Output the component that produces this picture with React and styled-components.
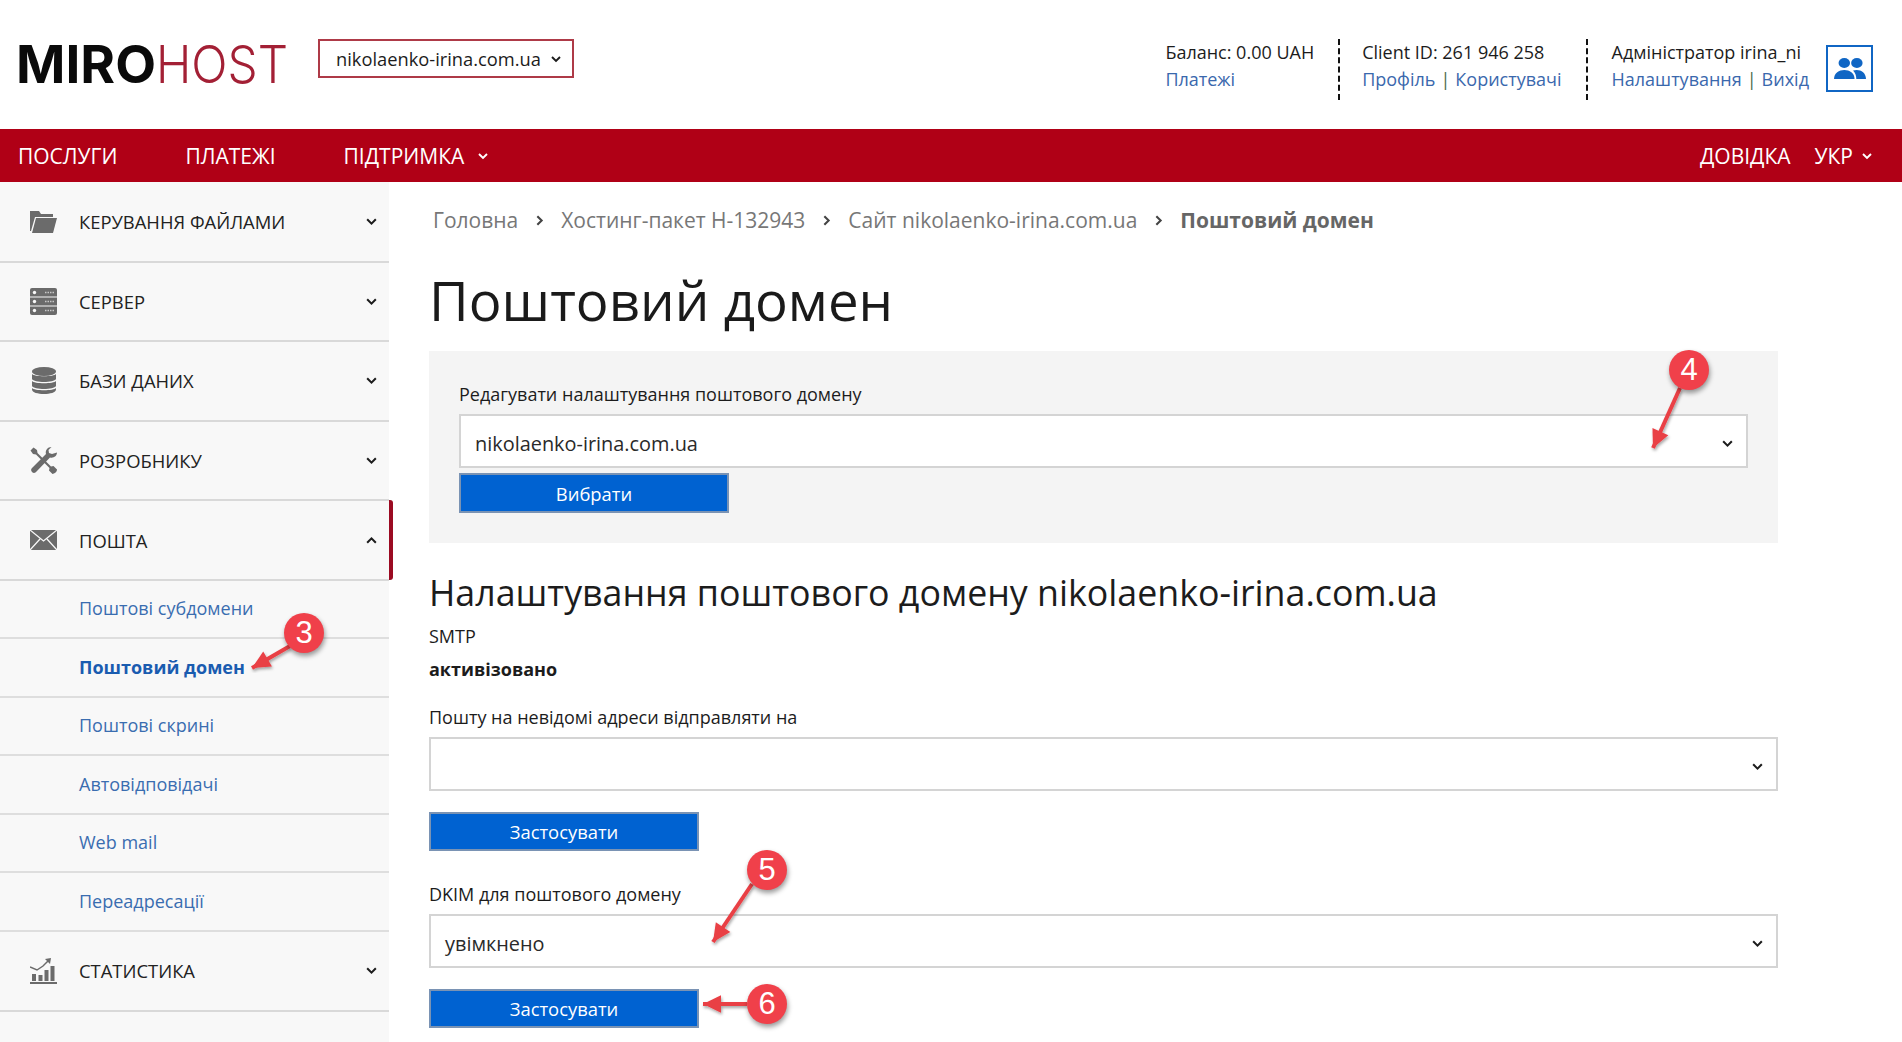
import React from "react";
import styled, { createGlobalStyle } from "styled-components";

const GlobalStyle = createGlobalStyle`
  html, body {
    margin: 0;
    padding: 0;
    background: #fff;
    font-family: "Open Sans", "Liberation Sans", sans-serif;
    color: #1c1c1c;
  }
`;

const Page = styled.div`
  position: relative;
  width: 1902px;
  height: 1042px;
  overflow: hidden;
`;

const Header = styled.header`
  height: 129px;
  display: flex;
  align-items: flex-start;
  box-sizing: border-box;
  padding: 39px 29px 0 18px;
`;

const LogoSvg = styled.svg`
  display: block;
  flex: none;
  width: 302px;
  height: 70px;
  margin: -6px 0 -25px -2px;
`;

const DomainPicker = styled.div`
  width: 256px;
  height: 39px;
  box-sizing: border-box;
  border: 2px solid #ae3a47;
  display: flex;
  align-items: center;
  padding-left: 16px;
  font-size: 18.3px;
  gap: 9px;
`;

const HeaderRight = styled.div`
  margin-left: auto;
  display: flex;
  align-items: flex-start;
`;

const InfoBlock = styled.div`
  height: 61px;
  box-sizing: border-box;
  font-size: 18px;
  line-height: 27px;
  padding: 0 ${(p) => p.$right}px 0 ${(p) => p.$left}px;
  border-right: ${(p) => (p.$divider ? "2px dashed #111" : "none")};
`;

const InfoLine = styled.div`
  white-space: nowrap;
  color: #1c1c1c;
`;

const HeaderLink = styled.a`
  color: #3a68ad;
`;

const Pipe = styled.span`
  color: #4c6b4c;
  margin: 0 5px;
`;

const UserBox = styled.div`
  width: 47px;
  height: 47px;
  box-sizing: border-box;
  margin: 6px 0 0 17px;
  border: 2px solid #1066c4;
  display: flex;
  align-items: center;
  justify-content: center;
`;

const NavBar = styled.nav`
  height: 53px;
  background: #b00016;
  color: #fff;
  display: flex;
  align-items: center;
  padding: 0 29px 0 18px;
  font-size: 21px;
`;

const NavItem = styled.a`
  display: flex;
  align-items: center;
  gap: ${(p) => p.$inner || 14}px;
  margin-right: ${(p) => p.$gap || 0}px;
`;

const NavSpacer = styled.div`
  flex: 1;
`;

const Body = styled.div`
  display: flex;
  align-items: stretch;
  height: 860px;
`;

const Sidebar = styled.aside`
  width: 389px;
  flex: none;
  background: #f8f8f8;
  padding-top: 1px;
`;

const MenuRow = styled.div`
  position: relative;
  height: 79.6px;
  box-sizing: border-box;
  display: flex;
  align-items: center;
  border-bottom: 2px solid #d9d9d9;
  padding: 0 11px 0 30px;
  font-size: 18.4px;
  color: #222;

  ${(p) =>
    p.$active &&
    `&::after {
      content: "";
      position: absolute;
      right: -4px;
      top: -1px;
      bottom: -1px;
      width: 4px;
      background: #9b0a22;
      border-radius: 0 3px 3px 0;
    }`}
`;

const MenuIcon = styled.span`
  width: 27px;
  height: 27px;
  flex: none;
  margin-right: 22px;
  display: flex;
  align-items: center;
  justify-content: center;
`;

const MenuLabel = styled.span`
  flex: 1;
`;

const SubRow = styled.a`
  height: 58.5px;
  box-sizing: border-box;
  display: flex;
  align-items: center;
  border-bottom: 2px solid #dedede;
  padding: 0 0 2px 79px;
  font-size: 18px;
  color: ${(p) => (p.$active ? "#1a5cb0" : "#3a6db0")};
  font-weight: ${(p) => (p.$active ? 700 : 400)};
`;

const Main = styled.main`
  width: 1349px;
  margin-left: 40px;
  flex: none;
`;

const Breadcrumbs = styled.div`
  height: 76px;
  display: flex;
  align-items: center;
  gap: 15px;
  padding-left: 4px;
  font-size: 21px;
  color: #777;
`;

const Crumb = styled.span`
  font-weight: ${(p) => (p.$current ? 700 : 400)};
  color: ${(p) => (p.$current ? "#666" : "#777")};
`;

const Title = styled.h1`
  margin: 0;
  height: 93px;
  line-height: 84px;
  font-size: 54.6px;
  font-weight: 400;
  color: #1a1a1a;
`;

const Panel = styled.section`
  height: 192px;
  box-sizing: border-box;
  background: #f4f4f4;
  padding: 30px 30px 0;
`;

const FieldLabel = styled.div`
  font-size: 18px;
  line-height: 26px;
  height: 33px;
`;

const SelectBox = styled.div`
  height: 54px;
  box-sizing: border-box;
  background: #fff;
  border: 2px solid #d4d4d4;
  display: flex;
  align-items: center;
  justify-content: space-between;
  padding: 4px 12px 0 14px;
  font-size: 19.9px;
  color: #2a2a2a;
`;

const Button = styled.button`
  display: block;
  width: 270px;
  height: ${(p) => p.$h || 39}px;
  margin-top: ${(p) => p.$top || 0}px;
  box-sizing: border-box;
  border: 2px solid #7a93b4;
  background: #0062d1;
  color: #fff;
  font-family: inherit;
  font-size: 18.4px;
  padding: 0;
`;

const SectionTitle = styled.h2`
  margin: 28px 0 0;
  font-size: 35.75px;
  line-height: 42px;
  font-weight: 400;
`;

const PlainLine = styled.div`
  font-size: 18px;
  line-height: 26px;
  margin-top: ${(p) => p.$top || 0}px;
  font-weight: ${(p) => (p.$bold ? 700 : 400)};
`;

const FieldSpacer = styled.div`
  height: ${(p) => p.$h}px;
`;

const Marker = styled.div`
  position: absolute;
  left: ${(p) => p.$x - 20}px;
  top: ${(p) => p.$y - 20}px;
  width: 40px;
  height: 40px;
  border-radius: 50%;
  background: #f0404a;
  box-shadow: 1px 3px 5px rgba(0, 0, 0, 0.4);
  color: #fff;
  font-family: "Liberation Sans", Arial, sans-serif;
  font-size: 31px;
  line-height: 39px;
  text-align: center;
`;

const ArrowLayer = styled.svg`
  position: absolute;
  left: 0;
  top: 0;
  width: 1902px;
  height: 1042px;
  pointer-events: none;
`;

const chevronPaths = {
  down: "M2 4 L6 8 L10 4",
  up: "M2 8 L6 4 L10 8",
  right: "M4 2 L8 6 L4 10",
};

function Chevron({ dir = "down", color = "#1c1c1c", size = 13 }) {
  return (
    <svg width={size} height={size} viewBox="0 0 12 12" fill="none">
      <path d={chevronPaths[dir]} stroke={color} strokeWidth="1.9" />
    </svg>
  );
}

const GREY = "#6b6b6b";

const FolderIcon = () => (
  <svg width="27" height="24" viewBox="0 0 27 24" fill={GREY}>
    <path d="M0 1h9l2 3h12v3H5L1 21H0z" />
    <path d="M6 8h21l-4 15H2z" />
  </svg>
);

const ServerIcon = () => (
  <svg width="27" height="27" viewBox="0 0 27 27">
    <rect width="27" height="27" rx="2" fill={GREY} />
    <path d="M0 9h27M0 18h27" stroke="#f8f8f8" strokeWidth="1" />
    <circle cx="4.5" cy="4.5" r="1.7" fill="#f8f8f8" />
    <circle cx="4.5" cy="13.5" r="1.7" fill="#f8f8f8" />
    <circle cx="4.5" cy="22.5" r="1.7" fill="#f8f8f8" />
    <path d="M15 4.5h9M15 13.5h9M15 22.5h9" stroke="#c8c8c8" strokeWidth="1.5" strokeDasharray="1.5 1" />
  </svg>
);

const DatabaseIcon = () => (
  <svg width="24" height="27" viewBox="0 0 24 27" fill={GREY}>
    <ellipse cx="12" cy="4.5" rx="12" ry="4.5" />
    <path d="M0 7c2 3 22 3 24 0v5c-2 4-22 4-24 0z" />
    <path d="M0 14c2 3 22 3 24 0v5c-2 4-22 4-24 0z" />
    <path d="M0 21c2 3 22 3 24 0v1.5c0 6-24 6-24 0z" />
  </svg>
);

const ToolsIcon = () => (
  <svg width="27" height="27" viewBox="0 0 27 27" fill={GREY}>
    <path d="M0.500 3.500L3.500 0.500 7 3 7.500 6 21 19.500l2.500-.5 3.500 3.500c.3 2-2.500 4.500-4.500 4.500L19 23.500l.5-2.500L6 7.500 3 7z" />
    <path d="M27 5.500c0 3.500-3.500 6-7 5L6.500 24.500c-1 1.500-3 2-4.500.5-1.500-1.500-1-3.500.5-4.500L16 7c-1-3.500 1.500-7 5.500-7l-3 3 .5 3 3 1z" />
  </svg>
);

const MailIcon = () => (
  <svg width="27" height="20" viewBox="0 0 27 20">
    <rect width="27" height="20" fill={GREY} />
    <path d="M0 0l13.500 11L27 0M0 20l10-11M27 20L17 9" stroke="#f8f8f8" strokeWidth="1.300" fill="none" />
  </svg>
);

const StatsIcon = () => (
  <svg width="27" height="27" viewBox="0 0 27 27" fill={GREY}>
    <rect x="2" y="17" width="4" height="7" />
    <rect x="8.500" y="18" width="4" height="6" />
    <rect x="14.500" y="13" width="4" height="11" />
    <rect x="20.500" y="9" width="4" height="15" />
    <rect x="0" y="25" width="27" height="2" />
    <path d="M0 10l7 3 6-4 5-5" fill="none" stroke={GREY} strokeWidth="1.500" />
    <path d="M15 2l6-1-1 6z" />
  </svg>
);

const UsersIcon = () => (
  <svg width="32" height="22" viewBox="0 0 28 22" preserveAspectRatio="none" fill="#1066c4">
    <circle cx="9" cy="5" r="5" />
    <circle cx="20" cy="5" r="5" />
    <path d="M0 21c0-12 18-12 18 0z" />
    <path d="M19.500 21c0-3-.700-6-2.800-8.500 5-2 11.300 1 11.300 8.500z" />
  </svg>
);

const arrows = [
  { from: [290, 646], to: [252, 668] },
  { from: [1680, 388], to: [1653, 448] },
  { from: [752, 884], to: [713, 942] },
  { from: [747, 1004], to: [703, 1004] },
];

function arrowHead(from, to) {
  const angle = Math.atan2(to[1] - from[1], to[0] - from[0]);
  const wing = (a) => [
    to[0] - 20 * Math.cos(angle + a),
    to[1] - 20 * Math.sin(angle + a),
  ];
  return [to, wing(0.45), wing(-0.45)].map((p) => p.join(",")).join(" ");
}

const menuTop = [
  ["КЕРУВАННЯ ФАЙЛАМИ", <FolderIcon />],
  ["СЕРВЕР", <ServerIcon />],
  ["БАЗИ ДАНИХ", <DatabaseIcon />],
  ["РОЗРОБНИКУ", <ToolsIcon />],
];

const subItems = [
  "Поштові субдомени",
  "Поштовий домен",
  "Поштові скрині",
  "Автовідповідачі",
  "Web mail",
  "Переадресації",
];

const crumbs = [
  "Головна",
  "Хостинг-пакет Н-132943",
  "Сайт nikolaenko-irina.com.ua",
];

function App() {
  return (
    <Page>
      <GlobalStyle />
      <Header>
        <LogoSvg viewBox="0 0 302 70">
          <text
            x="0"
            y="50"
            fontFamily="Inter, sans-serif"
            fontWeight="700"
            fontSize="52"
            fill="#0a0a0a"
            textLength="140"
            lengthAdjust="spacingAndGlyphs"
          >
            MIRO
          </text>
          <text
            x="140"
            y="50"
            fontFamily="Inter, sans-serif"
            fontWeight="300"
            fontSize="52"
            fill="#a32035"
            textLength="132"
            lengthAdjust="spacingAndGlyphs"
          >
            HOST
          </text>
        </LogoSvg>
        <DomainPicker>
          nikolaenko-irina.com.ua
          <Chevron size={12} />
        </DomainPicker>
        <HeaderRight>
          <InfoBlock $left={0} $right={24} $divider>
            <InfoLine>Баланс: 0.00 UAH</InfoLine>
            <InfoLine>
              <HeaderLink>Платежі</HeaderLink>
            </InfoLine>
          </InfoBlock>
          <InfoBlock $left={22} $right={24} $divider>
            <InfoLine>Client ID: 261 946 258</InfoLine>
            <InfoLine>
              <HeaderLink>Профіль</HeaderLink>
              <Pipe>|</Pipe>
              <HeaderLink>Користувачі</HeaderLink>
            </InfoLine>
          </InfoBlock>
          <InfoBlock $left={24} $right={0}>
            <InfoLine>Адміністратор irina_ni</InfoLine>
            <InfoLine>
              <HeaderLink>Налаштування</HeaderLink>
              <Pipe>|</Pipe>
              <HeaderLink>Вихід</HeaderLink>
            </InfoLine>
          </InfoBlock>
          <UserBox>
            <UsersIcon />
          </UserBox>
        </HeaderRight>
      </Header>

      <NavBar>
        <NavItem $gap={68}>ПОСЛУГИ</NavItem>
        <NavItem $gap={68}>ПЛАТЕЖІ</NavItem>
        <NavItem $inner={13}>
          ПІДТРИМКА
          <Chevron color="#fff" size={12} />
        </NavItem>
        <NavSpacer />
        <NavItem $gap={24}>ДОВІДКА</NavItem>
        <NavItem $inner={8}>
          УКР
          <Chevron color="#fff" size={12} />
        </NavItem>
      </NavBar>

      <Body>
        <Sidebar>
          {menuTop.map(([label, icon]) => (
            <MenuRow key={label}>
              <MenuIcon>{icon}</MenuIcon>
              <MenuLabel>{label}</MenuLabel>
              <Chevron />
            </MenuRow>
          ))}
          <MenuRow $active>
            <MenuIcon>
              <MailIcon />
            </MenuIcon>
            <MenuLabel>ПОШТА</MenuLabel>
            <Chevron dir="up" />
          </MenuRow>
          {subItems.map((item) => (
            <SubRow key={item} $active={item === "Поштовий домен"}>
              {item}
            </SubRow>
          ))}
          <MenuRow>
            <MenuIcon>
              <StatsIcon />
            </MenuIcon>
            <MenuLabel>СТАТИСТИКА</MenuLabel>
            <Chevron />
          </MenuRow>
        </Sidebar>

        <Main>
          <Breadcrumbs>
            {crumbs.map((c) => (
              <React.Fragment key={c}>
                <Crumb>{c}</Crumb>
                <Chevron dir="right" color="#444" />
              </React.Fragment>
            ))}
            <Crumb $current>Поштовий домен</Crumb>
          </Breadcrumbs>
          <Title>Поштовий домен</Title>
          <Panel>
            <FieldLabel>Редагувати налаштування поштового домену</FieldLabel>
            <SelectBox>
              nikolaenko-irina.com.ua
              <Chevron />
            </SelectBox>
            <Button $top={5} $h={40}>
              Вибрати
            </Button>
          </Panel>
          <SectionTitle>
            Налаштування поштового домену nikolaenko-irina.com.ua
          </SectionTitle>
          <PlainLine $top={10}>SMTP</PlainLine>
          <PlainLine $top={7} $bold>
            активізовано
          </PlainLine>
          <FieldSpacer $h={22} />
          <FieldLabel>Пошту на невідомі адреси відправляти на</FieldLabel>
          <SelectBox>
            <span />
            <Chevron />
          </SelectBox>
          <Button $top={21}>Застосувати</Button>
          <FieldSpacer $h={30} />
          <FieldLabel>DKIM для поштового домену</FieldLabel>
          <SelectBox>
            увімкнено
            <Chevron />
          </SelectBox>
          <Button $top={21}>Застосувати</Button>
        </Main>
      </Body>

      <ArrowLayer viewBox="0 0 1902 1042">
        <defs>
          <filter id="arrowShadow" x="-20%" y="-20%" width="140%" height="140%">
            <feDropShadow dx="1" dy="2" stdDeviation="1.5" floodOpacity="0.35" />
          </filter>
        </defs>
        {arrows.map(({ from, to }) => (
          <g key={to.join()} filter="url(#arrowShadow)">
            <line
              x1={from[0]}
              y1={from[1]}
              x2={to[0]}
              y2={to[1]}
              stroke="#e93f45"
              strokeWidth="4"
            />
            <polygon points={arrowHead(from, to)} fill="#e93f45" />
          </g>
        ))}
      </ArrowLayer>
      <Marker $x={304} $y={633}>3</Marker>
      <Marker $x={1689} $y={370}>4</Marker>
      <Marker $x={767} $y={870}>5</Marker>
      <Marker $x={767} $y={1004}>6</Marker>
    </Page>
  );
}

export default App;
